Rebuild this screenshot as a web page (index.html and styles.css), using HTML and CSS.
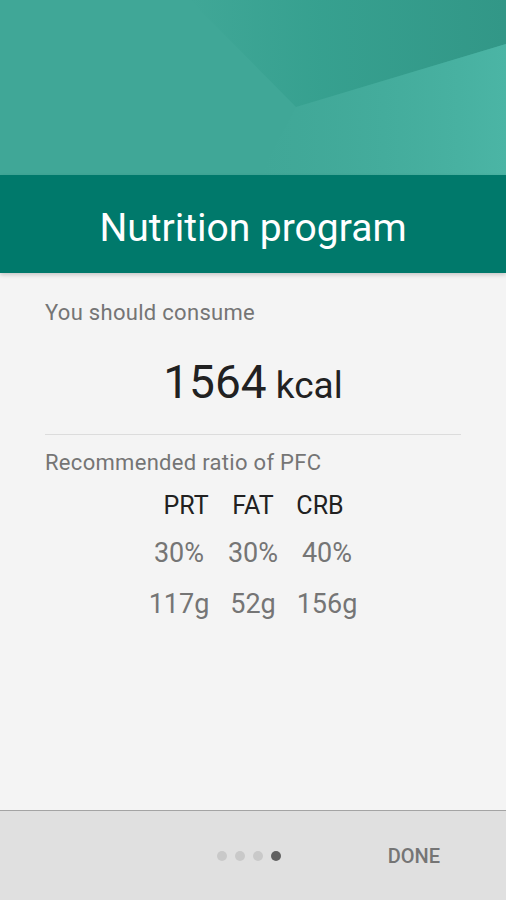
FILE: index.html
```html
<!DOCTYPE html>
<html lang="en">
<head>
    <meta charset="UTF-8">
    <meta name="viewport" content="width=device-width, initial-scale=1.0">
    <title>Nutrition program</title>
    <link rel="stylesheet" href="styles.css">
</head>
<body>
    <div class="hero">
        <svg class="hero-art" viewBox="0 0 506 175" preserveAspectRatio="none">
            <defs>
                <linearGradient id="darkFade" x1="190" y1="0" x2="506" y2="0" gradientUnits="userSpaceOnUse">
                    <stop offset="0" stop-color="#36a08f" stop-opacity="0"/>
                    <stop offset="0.4" stop-color="#36a08f" stop-opacity="0.95"/>
                    <stop offset="1" stop-color="#329787"/>
                </linearGradient>
                <linearGradient id="lightFade" x1="260" y1="0" x2="506" y2="0" gradientUnits="userSpaceOnUse">
                    <stop offset="0" stop-color="#45ad9d" stop-opacity="0"/>
                    <stop offset="1" stop-color="#4bb5a5"/>
                </linearGradient>
            </defs>
            <rect width="506" height="175" fill="#40a797"/>
            <polygon points="190,0 506,0 506,44 296,107" fill="url(#darkFade)"/>
            <polygon points="296,107 506,44 506,175 260,175" fill="url(#lightFade)"/>
        </svg>
    </div>

    <div class="titlebar">
        <h1>Nutrition program</h1>
    </div>

    <main class="content">
        <p class="label">You should consume</p>
        <p class="calories"><span class="calories-num">1564</span> kcal</p>
        <hr class="divider">
        <p class="label label-pfc">Recommended ratio of PFC</p>

        <div class="pfc-head">
            <span>PRT</span>
            <span>FAT</span>
            <span>CRB</span>
        </div>
        <div class="pfc-row">
            <span>30%</span>
            <span>30%</span>
            <span>40%</span>
        </div>
        <div class="pfc-row">
            <span>117g</span>
            <span>52g</span>
            <span>156g</span>
        </div>
    </main>

    <footer class="footer">
        <div></div>
        <div class="dots">
            <span class="dot"></span>
            <span class="dot"></span>
            <span class="dot"></span>
            <span class="dot active"></span>
        </div>
        <button class="done">DONE</button>
    </footer>
</body>
</html>
```

FILE: styles.css
```css
:root {
    --primary-dark: #00796b;
    --bg: #f4f4f4;
    --text-main: #212121;
    --text-muted: #757575;
    --footer-bg: #e0e0e0;
}

* {
    box-sizing: border-box;
    margin: 0;
    padding: 0;
}

body {
    font-family: Roboto, 'Noto Sans', sans-serif;
    background: var(--bg);
    color: var(--text-main);
    width: 506px;
    height: 900px;
    display: flex;
    flex-direction: column;
    overflow: hidden;
}

.hero {
    height: 175px;
    flex-shrink: 0;
}

.hero-art {
    display: block;
    width: 100%;
    height: 100%;
}

.titlebar {
    height: 98px;
    flex-shrink: 0;
    background: var(--primary-dark);
    display: flex;
    align-items: center;
    justify-content: center;
    box-shadow: 0 2px 4px rgba(0, 0, 0, 0.18);
    position: relative;
    z-index: 1;
}

.titlebar h1 {
    color: #ffffff;
    font-size: 39px;
    font-weight: 400;
    line-height: 44px;
    margin-top: 8px;
}

.content {
    flex: 1;
    padding: 28px 45px 0;
}

.label {
    font-size: 22px;
    line-height: 24px;
    letter-spacing: 0.3px;
    color: var(--text-muted);
}

.calories {
    margin-top: 31px;
    text-align: center;
    font-size: 37px;
    line-height: 52px;
    color: var(--text-main);
}

.calories-num {
    font-size: 46px;
}

.divider {
    border: none;
    border-top: 1px solid #dcdcdc;
    margin-top: 22px;
}

.label-pfc {
    margin-top: 16px;
}

.pfc-head,
.pfc-row {
    display: grid;
    justify-content: center;
    text-align: center;
}

.pfc-head {
    grid-template-columns: repeat(3, 67px);
    margin-top: 16px;
    font-size: 25px;
    line-height: 30px;
    color: var(--text-main);
}

.pfc-row {
    grid-template-columns: repeat(3, 74px);
    margin-top: 14px;
    font-size: 27px;
    line-height: 36px;
    color: var(--text-muted);
}

.pfc-row + .pfc-row {
    margin-top: 15px;
}

.footer {
    height: 90px;
    flex-shrink: 0;
    background: var(--footer-bg);
    border-top: 1px solid #a4a4a4;
    display: grid;
    grid-template-columns: 1fr auto 1fr;
    align-items: center;
}

.dots {
    display: flex;
    gap: 8px;
    margin-left: -8px;
}

.dot {
    width: 10px;
    height: 10px;
    border-radius: 50%;
    background: #c9c9c9;
}

.dot.active {
    background: #616161;
}

.done {
    justify-self: end;
    margin-right: 66px;
    background: none;
    border: none;
    font-family: inherit;
    font-size: 20px;
    font-weight: 500;
    color: var(--text-muted);
    line-height: 24px;
}
```
